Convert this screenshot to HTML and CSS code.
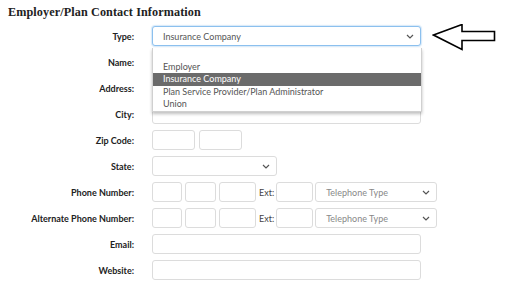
FILE: index.html
```html
<!DOCTYPE html>
<html lang="en">
<head>
    <meta charset="UTF-8">
    <meta name="viewport" content="width=device-width, initial-scale=1.0">
    <title>Employer/Plan Contact Information</title>
    <link rel="stylesheet" href="styles.css">
</head>
<body>
    <div class="page">
        <h2 class="section-title">Employer/Plan Contact Information</h2>

        <div class="form">
            <div class="row">
                <label class="label">Type:</label>
                <div class="field type-field">
                    <div class="select select-focus select-wide">
                        <span>Insurance Company</span>
                        <svg class="chevron" width="8" height="5" viewBox="0 0 8 5"><path d="M1 1 L4 4 L7 1" fill="none" stroke="#555" stroke-width="1.2"/></svg>
                    </div>
                    <ul class="dropdown">
                        <li class="option empty">&nbsp;</li>
                        <li class="option">Employer</li>
                        <li class="option selected">Insurance Company</li>
                        <li class="option">Plan Service Provider/Plan Administrator</li>
                        <li class="option">Union</li>
                    </ul>
                    <svg class="pointer" width="66" height="30" viewBox="0 0 66 30">
                        <path d="M1.5 11 L30 0.5 L30 7.5 L62.5 7.5 L62.5 16.5 L30 16.5 L30 25.5 Z" fill="#fff" stroke="#000" stroke-width="1.6" stroke-linejoin="miter"/>
                    </svg>
                </div>
            </div>

            <div class="row">
                <label class="label">Name:</label>
                <div class="field"><input class="input input-wide" type="text"></div>
            </div>

            <div class="row">
                <label class="label">Address:</label>
                <div class="field"><input class="input input-wide" type="text"></div>
            </div>

            <div class="row">
                <label class="label">City:</label>
                <div class="field"><input class="input input-wide" type="text"></div>
            </div>

            <div class="row">
                <label class="label">Zip Code:</label>
                <div class="field">
                    <input class="input zip" type="text">
                    <input class="input zip" type="text">
                </div>
            </div>

            <div class="row">
                <label class="label">State:</label>
                <div class="field">
                    <div class="select select-state">
                        <span></span>
                        <svg class="chevron" width="8" height="5" viewBox="0 0 8 5"><path d="M1 1 L4 4 L7 1" fill="none" stroke="#555" stroke-width="1.2"/></svg>
                    </div>
                </div>
            </div>

            <div class="row">
                <label class="label">Phone Number:</label>
                <div class="field phone">
                    <input class="input ph-a" type="text">
                    <input class="input ph-b" type="text">
                    <input class="input ph-c" type="text">
                    <span class="ext">Ext:</span>
                    <input class="input ph-ext" type="text">
                    <div class="select select-tel">
                        <span class="placeholder">Telephone Type</span>
                        <svg class="chevron" width="8" height="5" viewBox="0 0 8 5"><path d="M1 1 L4 4 L7 1" fill="none" stroke="#555" stroke-width="1.2"/></svg>
                    </div>
                </div>
            </div>

            <div class="row">
                <label class="label">Alternate Phone Number:</label>
                <div class="field phone">
                    <input class="input ph-a" type="text">
                    <input class="input ph-b" type="text">
                    <input class="input ph-c" type="text">
                    <span class="ext">Ext:</span>
                    <input class="input ph-ext" type="text">
                    <div class="select select-tel">
                        <span class="placeholder">Telephone Type</span>
                        <svg class="chevron" width="8" height="5" viewBox="0 0 8 5"><path d="M1 1 L4 4 L7 1" fill="none" stroke="#555" stroke-width="1.2"/></svg>
                    </div>
                </div>
            </div>

            <div class="row">
                <label class="label">Email:</label>
                <div class="field"><input class="input input-wide" type="text"></div>
            </div>

            <div class="row">
                <label class="label">Website:</label>
                <div class="field"><input class="input input-wide" type="text"></div>
            </div>
        </div>
    </div>
</body>
</html>
```

FILE: styles.css
```css
body {
    margin: 0;
    background-color: #ffffff;
    font-family: Lato, "Open Sans", sans-serif;
    color: #333;
}

.page {
    padding: 4px 0 0 8px;
}

.section-title {
    font-family: "Liberation Serif", serif;
    font-weight: bold;
    font-size: 12.2px;
    letter-spacing: 0.1px;
    color: #222;
    margin: 0;
    height: 22px;
    line-height: 16px;
}

.form {
    display: flex;
    flex-direction: column;
    gap: 6px;
}

.row {
    display: grid;
    grid-template-columns: 126px 1fr;
    column-gap: 18px;
    align-items: center;
    height: 20px;
}

.label {
    text-align: right;
    font-weight: bold;
    font-size: 9px;
    color: #222;
}

.field {
    display: flex;
    align-items: center;
    gap: 4px;
    height: 20px;
}

.type-field {
    position: relative;
}

.input {
    box-sizing: border-box;
    height: 20px;
    border: 1px solid #dcdcdc;
    border-radius: 3px;
    margin: 0;
    padding: 0 6px;
    background: #fff;
}

.input-wide {
    width: 269px;
}

.zip {
    width: 43px;
}

.select {
    box-sizing: border-box;
    height: 20px;
    border: 1px solid #dcdcdc;
    border-radius: 3px;
    display: flex;
    align-items: center;
    justify-content: space-between;
    padding: 0 6px 0 10px;
    font-size: 9px;
    color: #555;
    background: #fff;
}

.select-wide {
    width: 269px;
}

.select-focus {
    border-color: #8cc0ee;
    box-shadow: 0 0 1px 1px rgba(140, 192, 238, 0.35);
}

.select-state {
    width: 125px;
}

.select-tel {
    width: 122px;
    margin-left: -1px;
}

.placeholder {
    color: #888;
}

.chevron {
    display: block;
}

.phone {
    gap: 3px;
}

.ph-a {
    width: 30px;
}

.ph-b {
    width: 31px;
}

.ph-c {
    width: 37px;
}

.ph-ext {
    width: 37px;
    margin-left: -2px;
}

.ext {
    font-size: 9px;
    color: #444;
    margin: 0 1px 0 0;
}

.dropdown {
    position: absolute;
    top: 22px;
    left: 0;
    width: 268px;
    margin: 0;
    padding: 0;
    list-style: none;
    background: #fff;
    border: 1px solid #d0d0d0;
    border-top: none;
    box-shadow: 0 2px 3px rgba(0, 0, 0, 0.25);
    z-index: 2;
}

.option {
    height: 12.5px;
    line-height: 12.5px;
    font-size: 9px;
    color: #555;
    padding-left: 10px;
}

.option.selected {
    background-color: #6b6b6b;
    color: #fff;
}

.pointer {
    position: absolute;
    left: 280px;
    top: -2px;
}
```
